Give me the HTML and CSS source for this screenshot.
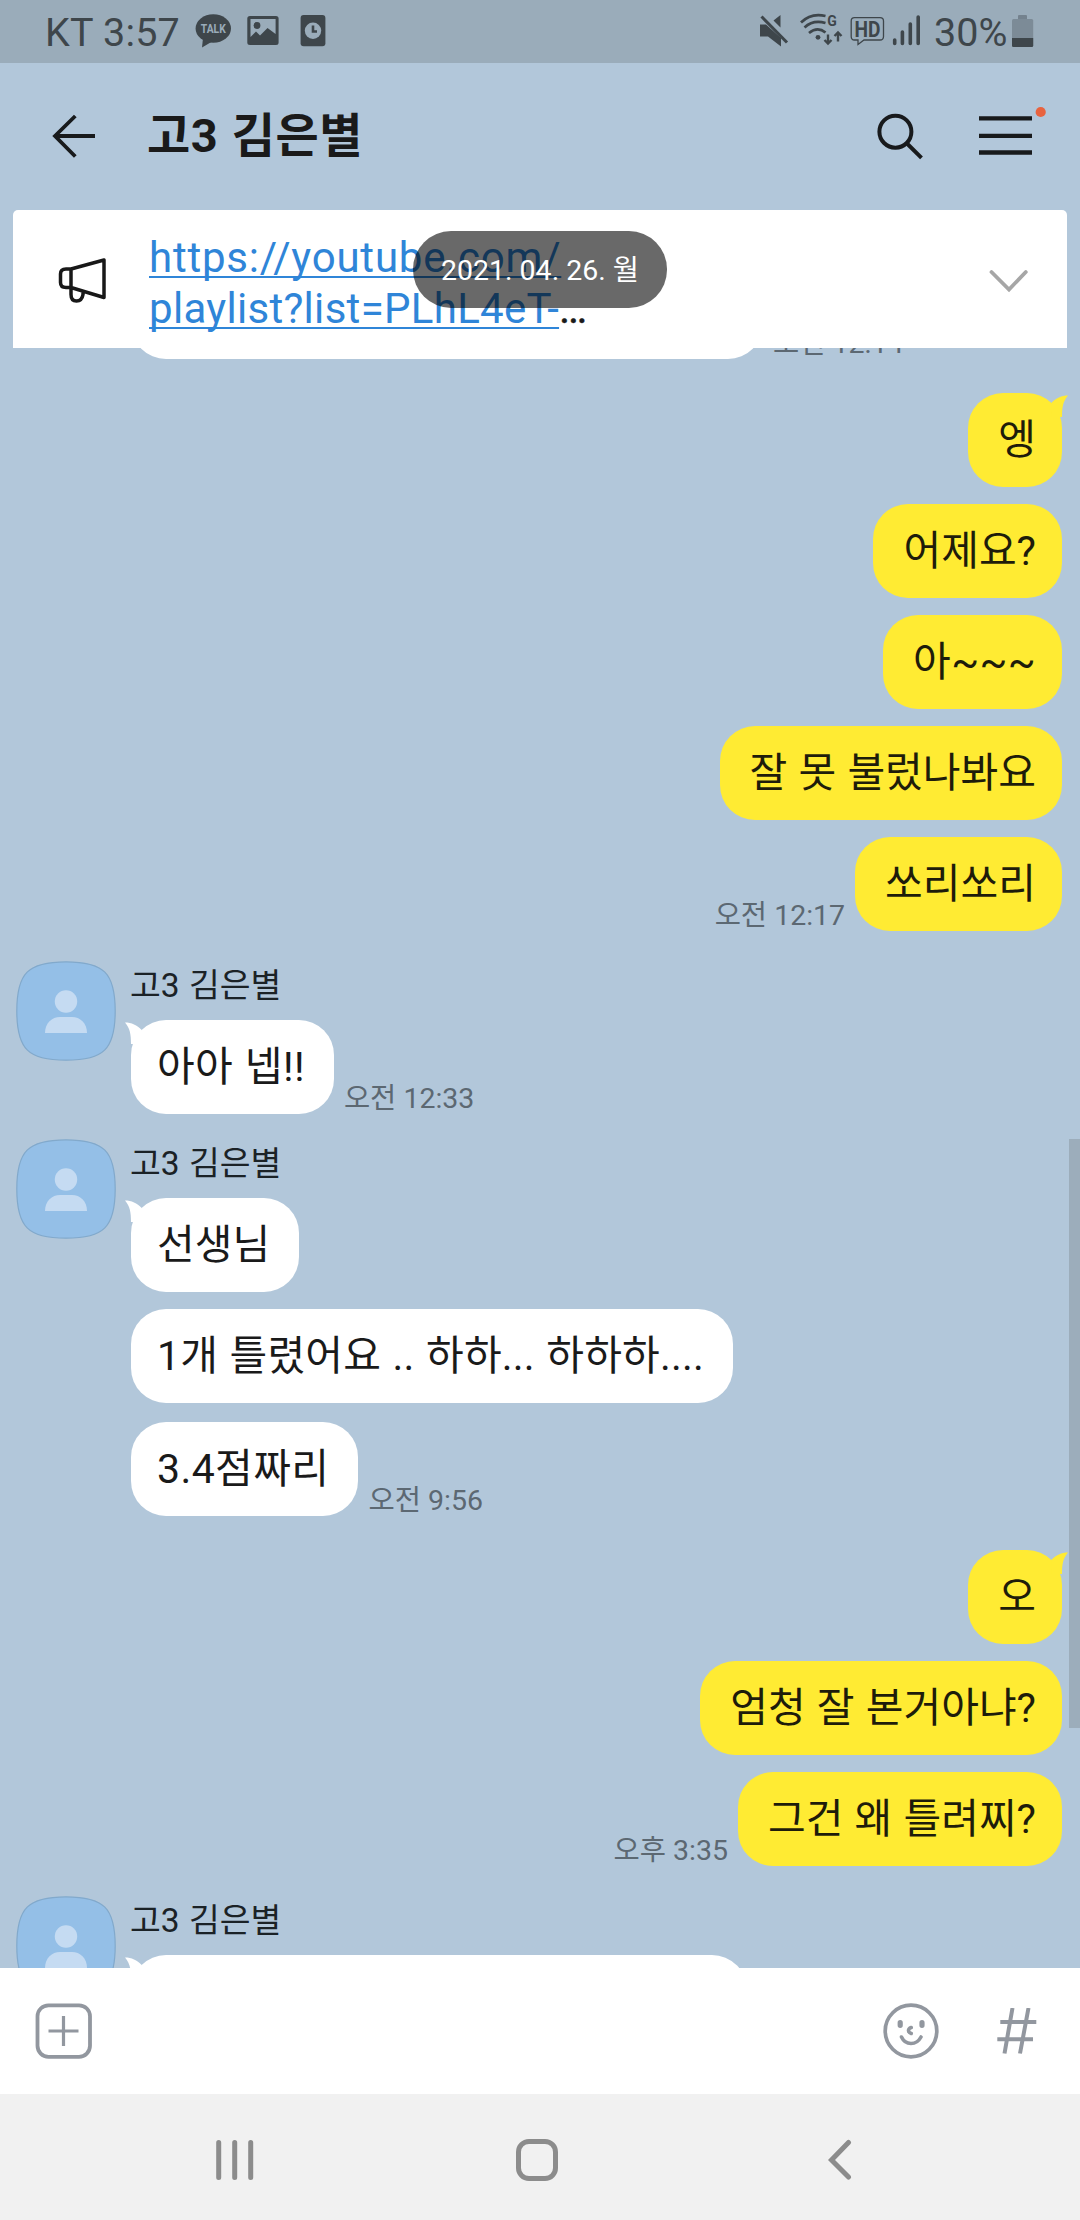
FILE: index.html
```html
<!DOCTYPE html>
<html lang="ko">
<head>
<meta charset="utf-8">
<title>고3 김은별</title>
<link rel="stylesheet" href="styles.css">
</head>
<body>
<svg class="defs" width="0" height="0" aria-hidden="true">
  <symbol id="avatar" viewBox="0 0 100 100">
    <path d="M50 .8C88 .8 99.200 12 99.200 50S88 99.200 50 99.200 .8 88 .8 50 12 .8 50 .8Z" fill="#94bfe7" stroke="#82a9cb" stroke-width="1.200"/>
    <circle cx="50" cy="40.500" r="11.200" fill="#c5dbf2"/>
    <path d="M29 72C29 62 36 56 44 56H56C64 56 71 62 71 72Z" fill="#c5dbf2"/>
  </symbol>
  <symbol id="tail" viewBox="0 0 20 24">
    <path d="M17 2.500C10.500 2.500 5 5 .3 10L0 24H11C11 14 12 8.500 17 2.500Z"/>
  </symbol>
</svg>
<div class="phone">
  <div class="status">
    <span class="status-text clock">KT 3:57</span>
    <svg class="status-left" width="132" height="36" viewBox="194 12 132 36" fill="#3e464b">
      <ellipse cx="213.300" cy="28.500" rx="17.700" ry="14.300"/>
      <path d="M203 38L202 47.500L213 41Z"/>
      <text x="213.300" y="33.200" text-anchor="middle" class="talk" fill="#9aacba" textLength="25" lengthAdjust="spacingAndGlyphs">TALK</text>
      <path fill-rule="evenodd" d="M250 16H276Q278.600 16 278.600 18.600V42.500Q278.600 45 276 45H250Q247.300 45 247.300 42.500V18.600Q247.300 16 250 16ZM250.500 19V37L256 31.500L260 35.500L267.500 28L275.600 34V19Z"/>
      <circle cx="257" cy="25.500" r="3.400"/>
      <rect x="300.600" y="15" width="24.800" height="31.300" rx="3"/>
      <circle cx="313" cy="30.700" r="8.200" fill="#9aacba"/>
      <path d="M313 25.500V31.500H317" fill="none" stroke="#3e464b" stroke-width="2.600"/>
    </svg>
    <svg class="status-right" width="162" height="36" viewBox="759 12 162 36" fill="#3e464b">
      <path d="M760 24.500H766L781 38V46.500L768 36.500H760ZM780.500 15V27.500L773.500 20.500Z"/>
      <path d="M761.500 16.500L787 42.500" stroke="#3e464b" stroke-width="3"/>
      <g fill="none" stroke="#3e464b" stroke-width="2.700">
        <path d="M801 22.500Q811 12.500 825.500 16"/>
        <path d="M804.500 27.500Q813 19.500 825.500 23"/>
        <path d="M809 33Q817.500 26 825.500 32.500"/>
        <path d="M828 34.500V43M824.500 40L828 43.500L831.500 40M838 41.500V33.500M834.500 36L838 32.500L841.500 36" stroke-width="2.400"/>
      </g>
      <circle cx="818" cy="37.300" r="2.400"/>
      <text x="832" y="26" text-anchor="middle" class="wifi-g">G</text>
      <path d="M854.500 17.700H880Q883.500 17.700 883.500 21V36.500Q883.500 40 880 40H864L858 44.500V40H854.500Q851.200 40 851.200 36.500V21Q851.200 17.700 854.500 17.700Z" fill="none" stroke="#3e464b" stroke-width="1.300"/>
      <text x="867.400" y="36.500" text-anchor="middle" class="hd" textLength="26" lengthAdjust="spacingAndGlyphs">HD</text>
      <path d="M894.700 40V43.500M902.400 32V43.500M910.300 24V43.500M918.200 17V43.500" stroke="#3e464b" stroke-width="3.600" stroke-linecap="round"/>
    </svg>
    <span class="status-text percent">30%</span>
    <svg class="battery" width="22" height="34" viewBox="0 0 22 34">
      <path d="M6 5V2Q6 1 7 1H14Q15 1 15 2V5Z" fill="#74828e"/>
      <rect x="0" y="5" width="21.200" height="28" rx="1.500" fill="#7c8b97"/>
      <path d="M0 24H21.200V31.500Q21.200 33 19.700 33H1.500Q0 33 0 31.500Z" fill="#3e464b"/>
    </svg>
  </div>

  <header class="header">
    <svg class="back" width="44" height="44" viewBox="0 0 44 44" fill="none" stroke="#181a1c" stroke-width="3.800"><path d="M23.300 2L3 22L23.300 42.500M3 22H43"/></svg>
    <h1 class="title">고3 김은별</h1>
    <svg class="search" width="48" height="48" viewBox="0 0 48 48" fill="none" stroke="#181a1c" stroke-width="4"><circle cx="19.400" cy="19.700" r="16"/><path d="M31 31.500L45.500 45.800"/></svg>
    <svg class="menu" width="70" height="54" viewBox="0 0 70 54"><path d="M0 12.300H53M0 29.800H53M0 46.500H53" stroke="#181a1c" stroke-width="4.300"/><circle cx="61.700" cy="6" r="5.100" fill="#e8633f"/></svg>
  </header>

  <section class="notice">
    <svg class="megaphone" width="50" height="46" viewBox="0 0 50 46" fill="none" stroke="#181818" stroke-width="3.500" stroke-linejoin="round"><path d="M13 11L46 2V39.500L13 29.500ZM13 11H8Q2.500 11 2.500 16V24.500Q2.500 29.500 8 29.500H13V36.500Q13 43 18.500 43T25 36.500V33.500"/></svg>
    <p class="notice-text"><span class="link host">https://youtube.com/</span><br><span class="link">playlist?list=PLhL4eT-</span><span class="more">…</span></p>
    <svg class="chevron" width="40" height="24" viewBox="0 0 40 24" fill="none" stroke="#a6a6a6" stroke-width="3.800" stroke-linecap="round"><path d="M2.500 3L20 20.500L36.800 3"/></svg>
    <div class="date-pill">2021. 04. 26. 월</div>
  </section>

  <main class="chat">
    <div class="row first"><div class="bubble wide-top"></div><time>오전 12:14</time></div>

    <div class="mine">
      <div class="row"><div class="bubble">엥<svg class="tail" width="20" height="24"><use href="#tail"/></svg></div></div>
      <div class="row"><div class="bubble">어제요?</div></div>
      <div class="row"><div class="bubble loose">아~~~</div></div>
      <div class="row"><div class="bubble">잘 못 불렀나봐요</div></div>
      <div class="row"><time>오전 12:17</time><div class="bubble">쏘리쏘리</div></div>
    </div>

    <div class="theirs">
      <svg class="avatar" width="100" height="100"><use href="#avatar"/></svg>
      <div class="stack">
        <div class="name">고3 김은별</div>
        <div class="row"><div class="bubble loose">아아 넵!!<svg class="tail" width="20" height="24"><use href="#tail"/></svg></div><time>오전 12:33</time></div>
      </div>
    </div>

    <div class="theirs next">
      <svg class="avatar" width="100" height="100"><use href="#avatar"/></svg>
      <div class="stack">
        <div class="name">고3 김은별</div>
        <div class="row"><div class="bubble">선생님<svg class="tail" width="20" height="24"><use href="#tail"/></svg></div></div>
        <div class="row"><div class="bubble long">1개 틀렸어요 .. 하하... 하하하....</div></div>
        <div class="row last"><div class="bubble loose">3.4점짜리</div><time>오전 9:56</time></div>
      </div>
    </div>

    <div class="mine">
      <div class="row"><div class="bubble">오<svg class="tail" width="20" height="24"><use href="#tail"/></svg></div></div>
      <div class="row"><div class="bubble">엄청 잘 본거아냐?</div></div>
      <div class="row"><time>오후 3:35</time><div class="bubble">그건 왜 틀려찌?</div></div>
    </div>

    <div class="theirs">
      <svg class="avatar" width="100" height="100"><use href="#avatar"/></svg>
      <div class="stack">
        <div class="name">고3 김은별</div>
        <div class="row"><div class="bubble wide-bottom"><svg class="tail" width="20" height="24"><use href="#tail"/></svg></div></div>
      </div>
    </div>
    <div class="scrollbar"></div>
  </main>

  <footer class="input">
    <svg width="58" height="56" viewBox="0 0 58 56" fill="none" stroke="#92979f"><rect x="2.500" y="2.300" width="52.500" height="51.500" rx="11" stroke-width="3.800"/><path d="M13.500 28H43.500M28.500 13V43" stroke-width="3.200"/></svg>
    <svg class="smile" width="56" height="56" viewBox="0 0 56 56" fill="none" stroke="#92979f" stroke-linecap="round"><circle cx="28" cy="28" r="25.800" stroke-width="3.700"/><path d="M17.200 19.700V22.300M39 19.700V22.300" stroke-width="5.200"/><path d="M28.200 24.500Q25.500 25.500 25.500 27.500T28.200 30.500M18.500 34Q21.500 40.500 28 40.500T38 34" stroke-width="3.600"/></svg>
    <svg class="hash" width="40" height="46" viewBox="0 0 40 46" fill="none" stroke="#92979f" stroke-width="4"><path d="M15.500 0L7.500 45.500M31.500 0L23 45.500M3.300 14H39.300M.3 31.200H36"/></svg>
  </footer>

  <nav class="nav">
    <svg width="38" height="42" viewBox="0 0 38 42" stroke="#8c8c8c" stroke-width="5" stroke-linecap="round"><path d="M2.700 3.500V38.500M18.700 3.500V38.500M34.700 3.500V38.500"/></svg>
    <svg class="home" width="42" height="42" viewBox="0 0 42 42" fill="none" stroke="#8c8c8c" stroke-width="5"><rect x="2.500" y="2.500" width="37" height="37" rx="10.500"/></svg>
    <svg class="nav-back" width="24" height="42" viewBox="0 0 24 42" fill="none" stroke="#8c8c8c" stroke-width="5" stroke-linecap="round"><path d="M20.500 3.500L3.500 21L20.500 38"/></svg>
  </nav>
</div>
</body>
</html>
```
FILE: styles.css
```css
* { box-sizing: border-box; }

body {
  margin: 0;
  font-family: Roboto, "Noto Sans CJK KR", sans-serif;
  color: #1a1a1a;
}

svg { display: block; flex: none; }
.defs { position: absolute; }

.phone {
  display: flex;
  flex-direction: column;
  width: 1080px;
  height: 2220px;
  overflow: hidden;
  background: #b2c7da;
}

/* status bar */
.status {
  display: flex;
  height: 63px;
  padding-left: 45px;
  background: #9aacba;
  color: #3e464b;
}
.status-text { font-size: 39.500px; line-height: 46px; padding-top: 10px; white-space: nowrap; }
.clock { width: 149px; letter-spacing: .2px; }
.status-left { margin-top: 12px; }
.status-right { margin: 12px 0 0 433px; }
.percent { width: 78px; margin-left: 13px; }
.battery { margin-top: 14px; }
.talk { font: bold 13px Roboto, sans-serif; }
.wifi-g { font: bold 14px Roboto, sans-serif; }
.hd { font: bold 22px Roboto, sans-serif; }

/* chat header */
.header { display: flex; height: 147px; padding-left: 52px; }
.back { margin-top: 51px; }
.title {
  width: 640px;
  margin: 43px 87px 0 51px;
  font-size: 47px;
  line-height: 60px;
  font-weight: 700;
  letter-spacing: .6px;
  word-spacing: 1px;
  white-space: nowrap;
}
.search { margin: 49px 0 0 2px; }
.menu { margin: 43px 0 0 55px; }

/* pinned notice */
.notice {
  position: relative;
  display: flex;
  height: 138px;
  margin: 0 13px;
  padding-left: 45px;
  background: #fff;
  border-radius: 5px 5px 0 0;
}
.megaphone { margin-top: 48px; }
.notice-text {
  width: 828px;
  margin: 23px 0 0 41px;
  font-size: 42px;
  line-height: 50.500px;
  letter-spacing: .3px;
  white-space: nowrap;
}
.more { -webkit-text-stroke: .4px #1a1a1a; }
.link {
  color: #2f85d8;
  text-decoration: underline;
  text-decoration-thickness: 2px;
  text-underline-offset: 4px;
  text-decoration-skip-ink: none;
}
.host { letter-spacing: .78px; }
.chevron { margin-top: 59px; margin-left: 12px; }
.date-pill {
  position: absolute;
  left: 400px;
  top: 21px;
  width: 254px;
  height: 77px;
  border-radius: 38px;
  background: rgba(0, 0, 0, .59);
  color: #fff;
  font-size: 28.500px;
  line-height: 79px;
  text-align: center;
  white-space: nowrap;
}

/* conversation */
.chat { position: relative; height: 1620px; overflow: hidden; }
.row { display: flex; align-items: flex-end; height: 94px; }
.bubble {
  position: relative;
  height: 94px;
  padding: 0 29px 0 26px;
  border-radius: 35px;
  background: #fff;
  font-size: 41px;
  line-height: 94px;
  word-spacing: 1px;
  white-space: nowrap;
}
.loose { letter-spacing: .4px; }
.long { letter-spacing: .2px; }
time {
  margin: 0 10px;
  font-size: 28.500px;
  line-height: 30px;
  color: #5c6872;
  white-space: nowrap;
}
.first { margin: -83px 0 0 131px; }
.wide-top { width: 632px; }
.wide-bottom { width: 616px; }

.mine {
  display: flex;
  flex-direction: column;
  gap: 17px;
  margin-top: 34px;
  padding-right: 18px;
}
.mine .row { justify-content: flex-end; }
.mine .bubble { background: #ffeb33; color: #1e1c0a; padding: 0 26px 0 30px; }

.theirs { display: flex; gap: 15px; margin-top: 30px; padding-left: 16px; }
.next { margin-top: 25px; }
.stack { display: flex; flex-direction: column; }
.stack .row + .row { margin-top: 17px; }
.stack .row.last { margin-top: 19px; }
.name {
  height: 59px;
  margin-left: -1px;
  font-size: 33.500px;
  line-height: 50px;
  word-spacing: 1px;
  color: #1b2226;
  white-space: nowrap;
}

.tail { position: absolute; top: 0; fill: #fff; }
.mine .tail { right: -9px; fill: #ffeb33; }
.theirs .tail { left: -9px; transform: scaleX(-1); }

.scrollbar {
  position: absolute;
  right: 0;
  top: 791px;
  width: 11px;
  height: 589px;
  background: #9cadbb;
}

/* message input */
.input { display: flex; align-items: center; height: 126px; padding-left: 35px; background: #fff; }
.smile { margin-left: 790px; }
.hash { margin-left: 58px; }

/* system navigation */
.nav { display: flex; align-items: center; height: 126px; padding: 6px 0 0 216px; background: #f1f1f1; }
.home { margin-left: 262px; }
.nav-back { margin-left: 270px; }
```
